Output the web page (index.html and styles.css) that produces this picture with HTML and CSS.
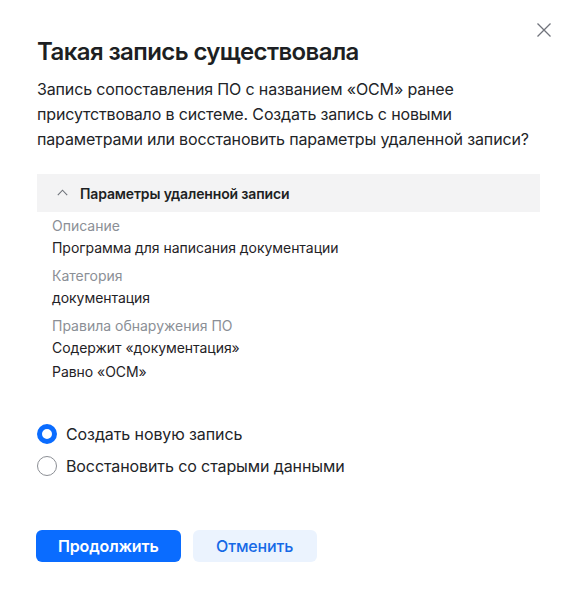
FILE: index.html
```html
<!DOCTYPE html>
<html lang="ru">
<head>
<meta charset="utf-8">
<title>Такая запись существовала</title>
<link rel="stylesheet" href="styles.css">
</head>
<body>
<div class="modal">
  <button class="close" aria-label="Закрыть">
    <svg width="16" height="16" viewBox="0 0 16 16"><path d="M1.5 1.5 L14.5 14.5 M14.5 1.5 L1.5 14.5" stroke="#70737b" stroke-width="1.3" fill="none"/></svg>
  </button>
  <h1 class="title">Такая запись существовала</h1>
  <p class="text">Запись сопоставления ПО с названием «ОСМ» ранее<br>присутствовало в системе. Создать запись с новыми<br>параметрами или восстановить параметры удаленной записи?</p>

  <div class="accordion">
    <div class="acc-head">
      <svg class="chev" width="11" height="7" viewBox="0 0 11 7"><path d="M0.8 6.2 L5.5 1.2 L10.2 6.2" stroke="#6f737a" stroke-width="1.1" fill="none"/></svg>
      <span>Параметры удаленной записи</span>
    </div>
    <div class="acc-body">
      <div class="group">
        <div class="label">Описание</div>
        <div class="value">Программа для написания документации</div>
      </div>
      <div class="group">
        <div class="label">Категория</div>
        <div class="value">документация</div>
      </div>
      <div class="group">
        <div class="label">Правила обнаружения ПО</div>
        <div class="value">Содержит «документация»</div>
        <div class="value">Равно «ОСМ»</div>
      </div>
    </div>
  </div>

  <div class="radios">
    <label class="radio"><span class="dot checked"></span><span>Создать новую запись</span></label>
    <label class="radio"><span class="dot"></span><span>Восстановить со старыми данными</span></label>
  </div>

  <div class="actions">
    <button class="btn primary">Продолжить</button>
    <button class="btn secondary">Отменить</button>
  </div>
</div>
</body>
</html>
```

FILE: styles.css
```css
html, body {
  margin: 0;
  padding: 0;
  background: #ffffff;
}
body {
  font-family: Inter, "Noto Sans", sans-serif;
  color: #1f2226;
}
.modal {
  position: relative;
  padding: 36px 37px 0;
}
.close {
  position: absolute;
  top: 22px;
  right: 25px;
  width: 16px;
  height: 16px;
  padding: 0;
  border: 0;
  background: none;
  display: flex;
}
.title {
  margin: 0;
  font-size: 24px;
  line-height: 32px;
  font-weight: 600;
  letter-spacing: -0.6px;
  color: #1d1f23;
}
.text {
  margin: 9px 0 0;
  font-size: 16px;
  line-height: 25px;
  letter-spacing: -0.15px;
  color: #222428;
}
.accordion {
  margin-top: 22px;
}
.acc-head {
  height: 38px;
  background: #f3f3f4;
  display: flex;
  align-items: center;
  gap: 12px;
  padding-left: 20px;
  font-size: 14px;
  font-weight: 600;
  letter-spacing: -0.15px;
  color: #1d1f23;
}
.chev {
  margin-top: -2px;
}
.acc-body {
  padding: 4px 15px 0;
  display: flex;
  flex-direction: column;
  gap: 6px;
}
.label {
  font-size: 14px;
  line-height: 20px;
  color: #8b8f96;
}
.value {
  font-size: 14px;
  line-height: 24px;
  letter-spacing: -0.05px;
  color: #1f2226;
}
.radios {
  margin-top: 34px;
  display: flex;
  flex-direction: column;
}
.radio {
  height: 32px;
  display: flex;
  align-items: center;
  gap: 9px;
  font-size: 16px;
  letter-spacing: -0.1px;
  color: #222428;
}
.dot {
  width: 20px;
  height: 20px;
  box-sizing: border-box;
  border-radius: 50%;
  border: 1px solid #8c8f95;
  background: #fff;
}
.dot.checked {
  border: 5px solid #0a6cff;
}
.actions {
  margin-top: 48px;
  display: flex;
  gap: 12px;
  margin-left: -1px;
}
.btn {
  height: 32px;
  border: 0;
  border-radius: 6px;
  font-family: Inter, "Noto Sans", sans-serif;
  font-size: 16px;
  font-weight: 600;
  letter-spacing: -0.15px;
  padding: 0 22px;
}
.primary {
  background: #0a6cff;
  color: #ffffff;
}
.secondary {
  background: #ebf3fe;
  color: #1669e6;
  font-weight: 500;
  padding: 0 23.5px;
}
```
